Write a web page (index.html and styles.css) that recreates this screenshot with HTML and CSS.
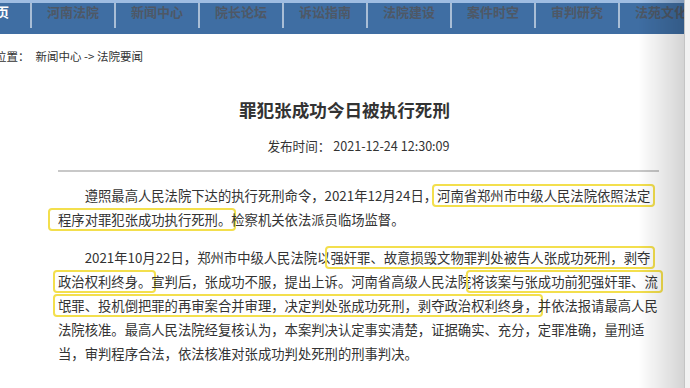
FILE: index.html
```html
<!DOCTYPE html>
<html lang="zh-CN">
<head>
<meta charset="UTF-8">
<meta name="viewport" content="width=device-width, initial-scale=1.0">
<title>罪犯张成功今日被执行死刑</title>
<link rel="stylesheet" href="styles.css">
</head>
<body>
  <div class="topnav">
    <a class="nav-item first">首页</a>
    <a class="nav-item">河南法院</a>
    <a class="nav-item">新闻中心</a>
    <a class="nav-item">院长论坛</a>
    <a class="nav-item">诉讼指南</a>
    <a class="nav-item">法院建设</a>
    <a class="nav-item">案件时空</a>
    <a class="nav-item">审判研究</a>
    <a class="nav-item">法苑文化</a>
  </div>

  <div class="crumb">位置：<span class="crumb-path">新闻中心 -&gt; 法院要闻</span></div>

  <div class="article">
    <h1 class="title">罪犯张成功今日被执行死刑</h1>
    <div class="meta">发布时间： 2021-12-24 12:30:09</div>

    <div class="content">
      <p>遵照最高人民法院下达的执行死刑命令，2021年12月24日，<span class="hl">河南省郑州市中级人民法院依照法定</span><span class="hl hl-wide">程序对罪犯张成功执行死刑。</span>检察机关依法派员临场监督。</p>
      <p>2021年10月22日，郑州市中级人民法院以<span class="hl">强奸罪、故意损毁文物罪判处被告人张成功死刑，剥夺</span><span class="hl">政治权利终身。</span>宣判后，张成功不服，提出上诉。河南省高级人民法院<span class="hl">将该案与张成功前犯强奸罪、流</span><span class="hl">氓罪、投机倒把罪的再审案合并审理，决定判处张成功死刑，剥夺政治权利终身，</span>并依法报请最高人民法院核准。最高人民法院经复核认为，本案判决认定事实清楚，证据确实、充分，定罪准确，量刑适当，审判程序合法，依法核准对张成功判处死刑的刑事判决。</p>
    </div>
  </div>

  <div class="edge-shade"></div>
  <div class="edge-strip"></div>
</body>
</html>
```

FILE: styles.css
```css
body {
  margin: 0;
  background-color: #fff;
  color: #333;
  font-family: "Noto Sans CJK SC", "Liberation Sans", sans-serif;
  overflow: hidden;
}

.topnav {
  display: flex;
  height: 31px;
  background-color: #3f6ea3;
  border-top: 3px solid #9fbde2;
}
.nav-item {
  flex: none;
  width: 82px;
  height: 25px;
  line-height: 17px;
  text-align: center;
  font-size: 13px;
  font-weight: bold;
  color: #4e5866;
  border-left: 2px solid #a9bed6;
}
.nav-item.first {
  width: auto;
  margin-left: -17px;
  padding-right: 21px;
  border-left: none;
  color: #fff;
}

.crumb {
  margin: 12px 0 0 -5px;
  font-size: 11.5px;
  line-height: 20px;
  color: #333;
}
.crumb-path {
  margin-left: 6px;
}

.article {
  margin-left: 58px;
  width: 601px;
}
.title {
  margin: 32px 0 0;
  padding-right: 28px;
  text-align: center;
  font-size: 17.6px;
  line-height: 24px;
  color: #333;
}
.meta {
  margin-top: 14px;
  text-align: center;
  font-size: 12.6px;
  line-height: 20px;
  padding-bottom: 14px;
  border-bottom: 2px solid #c8c8c8;
}

.content {
  padding-top: 12px;
}
.content p {
  margin: 0 0 14px;
  text-indent: 2em;
  font-size: 13.33px;
  line-height: 24px;
}
.hl {
  border: 2px solid #f3df4d;
  border-radius: 4px;
  padding: 0 3px;
  margin: 0 -5px;
}
.hl-wide {
  padding-left: 8px;
  margin-left: -10px;
}

.edge-shade {
  position: fixed;
  top: 0;
  right: 6px;
  width: 46px;
  height: 100%;
  background: linear-gradient(to right, rgba(0, 0, 0, 0), rgba(0, 0, 0, 0.17));
}
.edge-strip {
  position: fixed;
  top: 0;
  right: 0;
  width: 5px;
  height: 100%;
  background-color: #f2f2f2;
  border-left: 1px solid #c4c4c4;
}
```
